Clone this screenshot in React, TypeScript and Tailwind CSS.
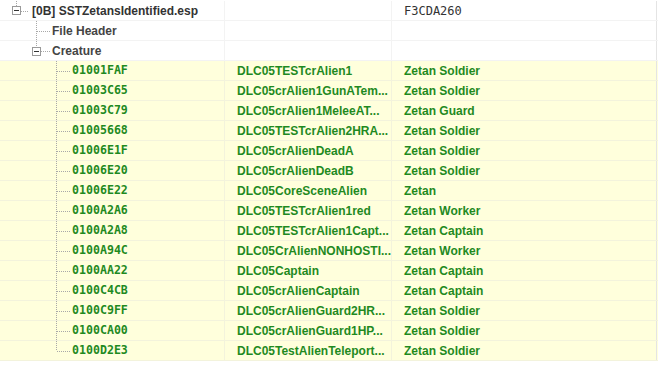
import type { ReactNode } from "react";

type Creature = {
  formId: string;
  editorId: string;
  name: string;
};

const CREATURES: Creature[] = [
  { formId: "01001FAF", editorId: "DLC05TESTcrAlien1", name: "Zetan Soldier" },
  { formId: "01003C65", editorId: "DLC05crAlien1GunATem...", name: "Zetan Soldier" },
  { formId: "01003C79", editorId: "DLC05crAlien1MeleeAT...", name: "Zetan Guard" },
  { formId: "01005668", editorId: "DLC05TESTcrAlien2HRA...", name: "Zetan Soldier" },
  { formId: "01006E1F", editorId: "DLC05crAlienDeadA", name: "Zetan Soldier" },
  { formId: "01006E20", editorId: "DLC05crAlienDeadB", name: "Zetan Soldier" },
  { formId: "01006E22", editorId: "DLC05CoreSceneAlien", name: "Zetan" },
  { formId: "0100A2A6", editorId: "DLC05TESTcrAlien1red", name: "Zetan Worker" },
  { formId: "0100A2A8", editorId: "DLC05TESTcrAlien1Capt...", name: "Zetan Captain" },
  { formId: "0100A94C", editorId: "DLC05CrAlienNONHOSTI...", name: "Zetan Worker" },
  { formId: "0100AA22", editorId: "DLC05Captain", name: "Zetan Captain" },
  { formId: "0100C4CB", editorId: "DLC05crAlienCaptain", name: "Zetan Captain" },
  { formId: "0100C9FF", editorId: "DLC05crAlienGuard2HR...", name: "Zetan Soldier" },
  { formId: "0100CA00", editorId: "DLC05crAlienGuard1HP...", name: "Zetan Soldier" },
  { formId: "0100D2E3", editorId: "DLC05TestAlienTeleport...", name: "Zetan Soldier" },
];

const SANS = "font-['Liberation_Sans',Arial,sans-serif]";
const MONO = "font-['DejaVu_Sans_Mono','Liberation_Mono',monospace]";
const DOT = "#a8a8a8";

// tree gutter: dotted lines and the little [-] boxes
function MinusBox({ x, y }: { x: number; y: number }) {
  return (
    <g>
      <rect x={x + 0.5} y={y + 0.5} width={8} height={8} fill="#fff" stroke="#9a9a9a" />
      <line x1={x + 2} y1={y + 4.5} x2={x + 7} y2={y + 4.5} stroke="#333" />
    </g>
  );
}

function Gutter({ kind, last }: { kind: "plugin" | "header" | "group" | "record"; last?: boolean }) {
  return (
    <svg width={72} height={20} className="shrink-0">
      {kind === "plugin" && (
        <>
          <line x1={16.5} y1={0} x2={16.5} y2={5} stroke={DOT} strokeDasharray="1 1" />
          <line x1={21} y1={10.5} x2={29} y2={10.5} stroke={DOT} strokeDasharray="1 1" />
          <MinusBox x={12} y={5} />
        </>
      )}
      {kind === "header" && (
        <>
          <line x1={36.5} y1={0} x2={36.5} y2={20} stroke={DOT} strokeDasharray="1 1" />
          <line x1={37} y1={10.5} x2={50} y2={10.5} stroke={DOT} strokeDasharray="1 1" />
        </>
      )}
      {kind === "group" && (
        <>
          <line x1={36.5} y1={0} x2={36.5} y2={5} stroke={DOT} strokeDasharray="1 1" />
          <line x1={41} y1={10.5} x2={50} y2={10.5} stroke={DOT} strokeDasharray="1 1" />
          <MinusBox x={32} y={6} />
        </>
      )}
      {kind === "record" && (
        <>
          <line x1={56.5} y1={0} x2={56.5} y2={last ? 10 : 20} stroke={DOT} strokeDasharray="1 1" />
          <line x1={57} y1={10.5} x2={70} y2={10.5} stroke={DOT} strokeDasharray="1 1" />
        </>
      )}
    </svg>
  );
}

function Row({
  yellow,
  first,
  second,
  third,
}: {
  yellow?: boolean;
  first: ReactNode;
  second?: ReactNode;
  third?: ReactNode;
}) {
  const line = yellow ? "border-[#f3f3dc]" : "border-[#f3f3f3]";
  return (
    <div
      className={`grid h-5 grid-cols-[225px_167px_265px] border-b ${line} ${
        yellow ? "bg-[#ffffdc]" : "bg-white"
      }`}
    >
      <div className={`flex h-[19px] items-center overflow-hidden border-r ${line} pt-px`}>{first}</div>
      <div className={`flex h-[19px] items-center overflow-hidden border-r ${line} pl-3 pt-px`}>{second}</div>
      <div className="flex h-[19px] items-center overflow-hidden border-r border-[#e4e4e4] pl-3 pt-px">{third}</div>
    </div>
  );
}

export default function App() {
  return (
    <div className="h-[365px] w-[660px] overflow-hidden bg-white">
      <div className="w-[658px] pt-px">
        <Row
          first={
            <>
              <Gutter kind="plugin" />
              <span className={`-ml-10 whitespace-nowrap text-[12px] font-bold text-[#333] ${SANS}`}>
                [0B] SSTZetansIdentified.esp
              </span>
            </>
          }
          third={<span className={`text-[12px] text-[#333] ${MONO}`}>F3CDA260</span>}
        />
        <Row
          first={
            <>
              <Gutter kind="header" />
              <span className={`-ml-5 whitespace-nowrap text-[12px] font-bold text-[#444] ${SANS}`}>
                File Header
              </span>
            </>
          }
        />
        <Row
          first={
            <>
              <Gutter kind="group" />
              <span className={`-ml-5 whitespace-nowrap text-[12px] font-bold text-[#444] ${SANS}`}>
                Creature
              </span>
            </>
          }
        />
        {CREATURES.map((c, i) => (
          <Row
            key={c.formId}
            yellow
            first={
              <>
                <Gutter kind="record" last={i === CREATURES.length - 1} />
                <span className={`whitespace-nowrap text-[11.6px] font-bold text-[#1f8a1f] ${MONO}`}>
                  {c.formId}
                </span>
              </>
            }
            second={
              <span className={`whitespace-nowrap text-[12px] font-bold text-[#1f8a1f] ${SANS}`}>
                {c.editorId}
              </span>
            }
            third={
              <span className={`whitespace-nowrap text-[12px] font-bold text-[#1f8a1f] ${SANS}`}>
                {c.name}
              </span>
            }
          />
        ))}
      </div>
    </div>
  );
}
